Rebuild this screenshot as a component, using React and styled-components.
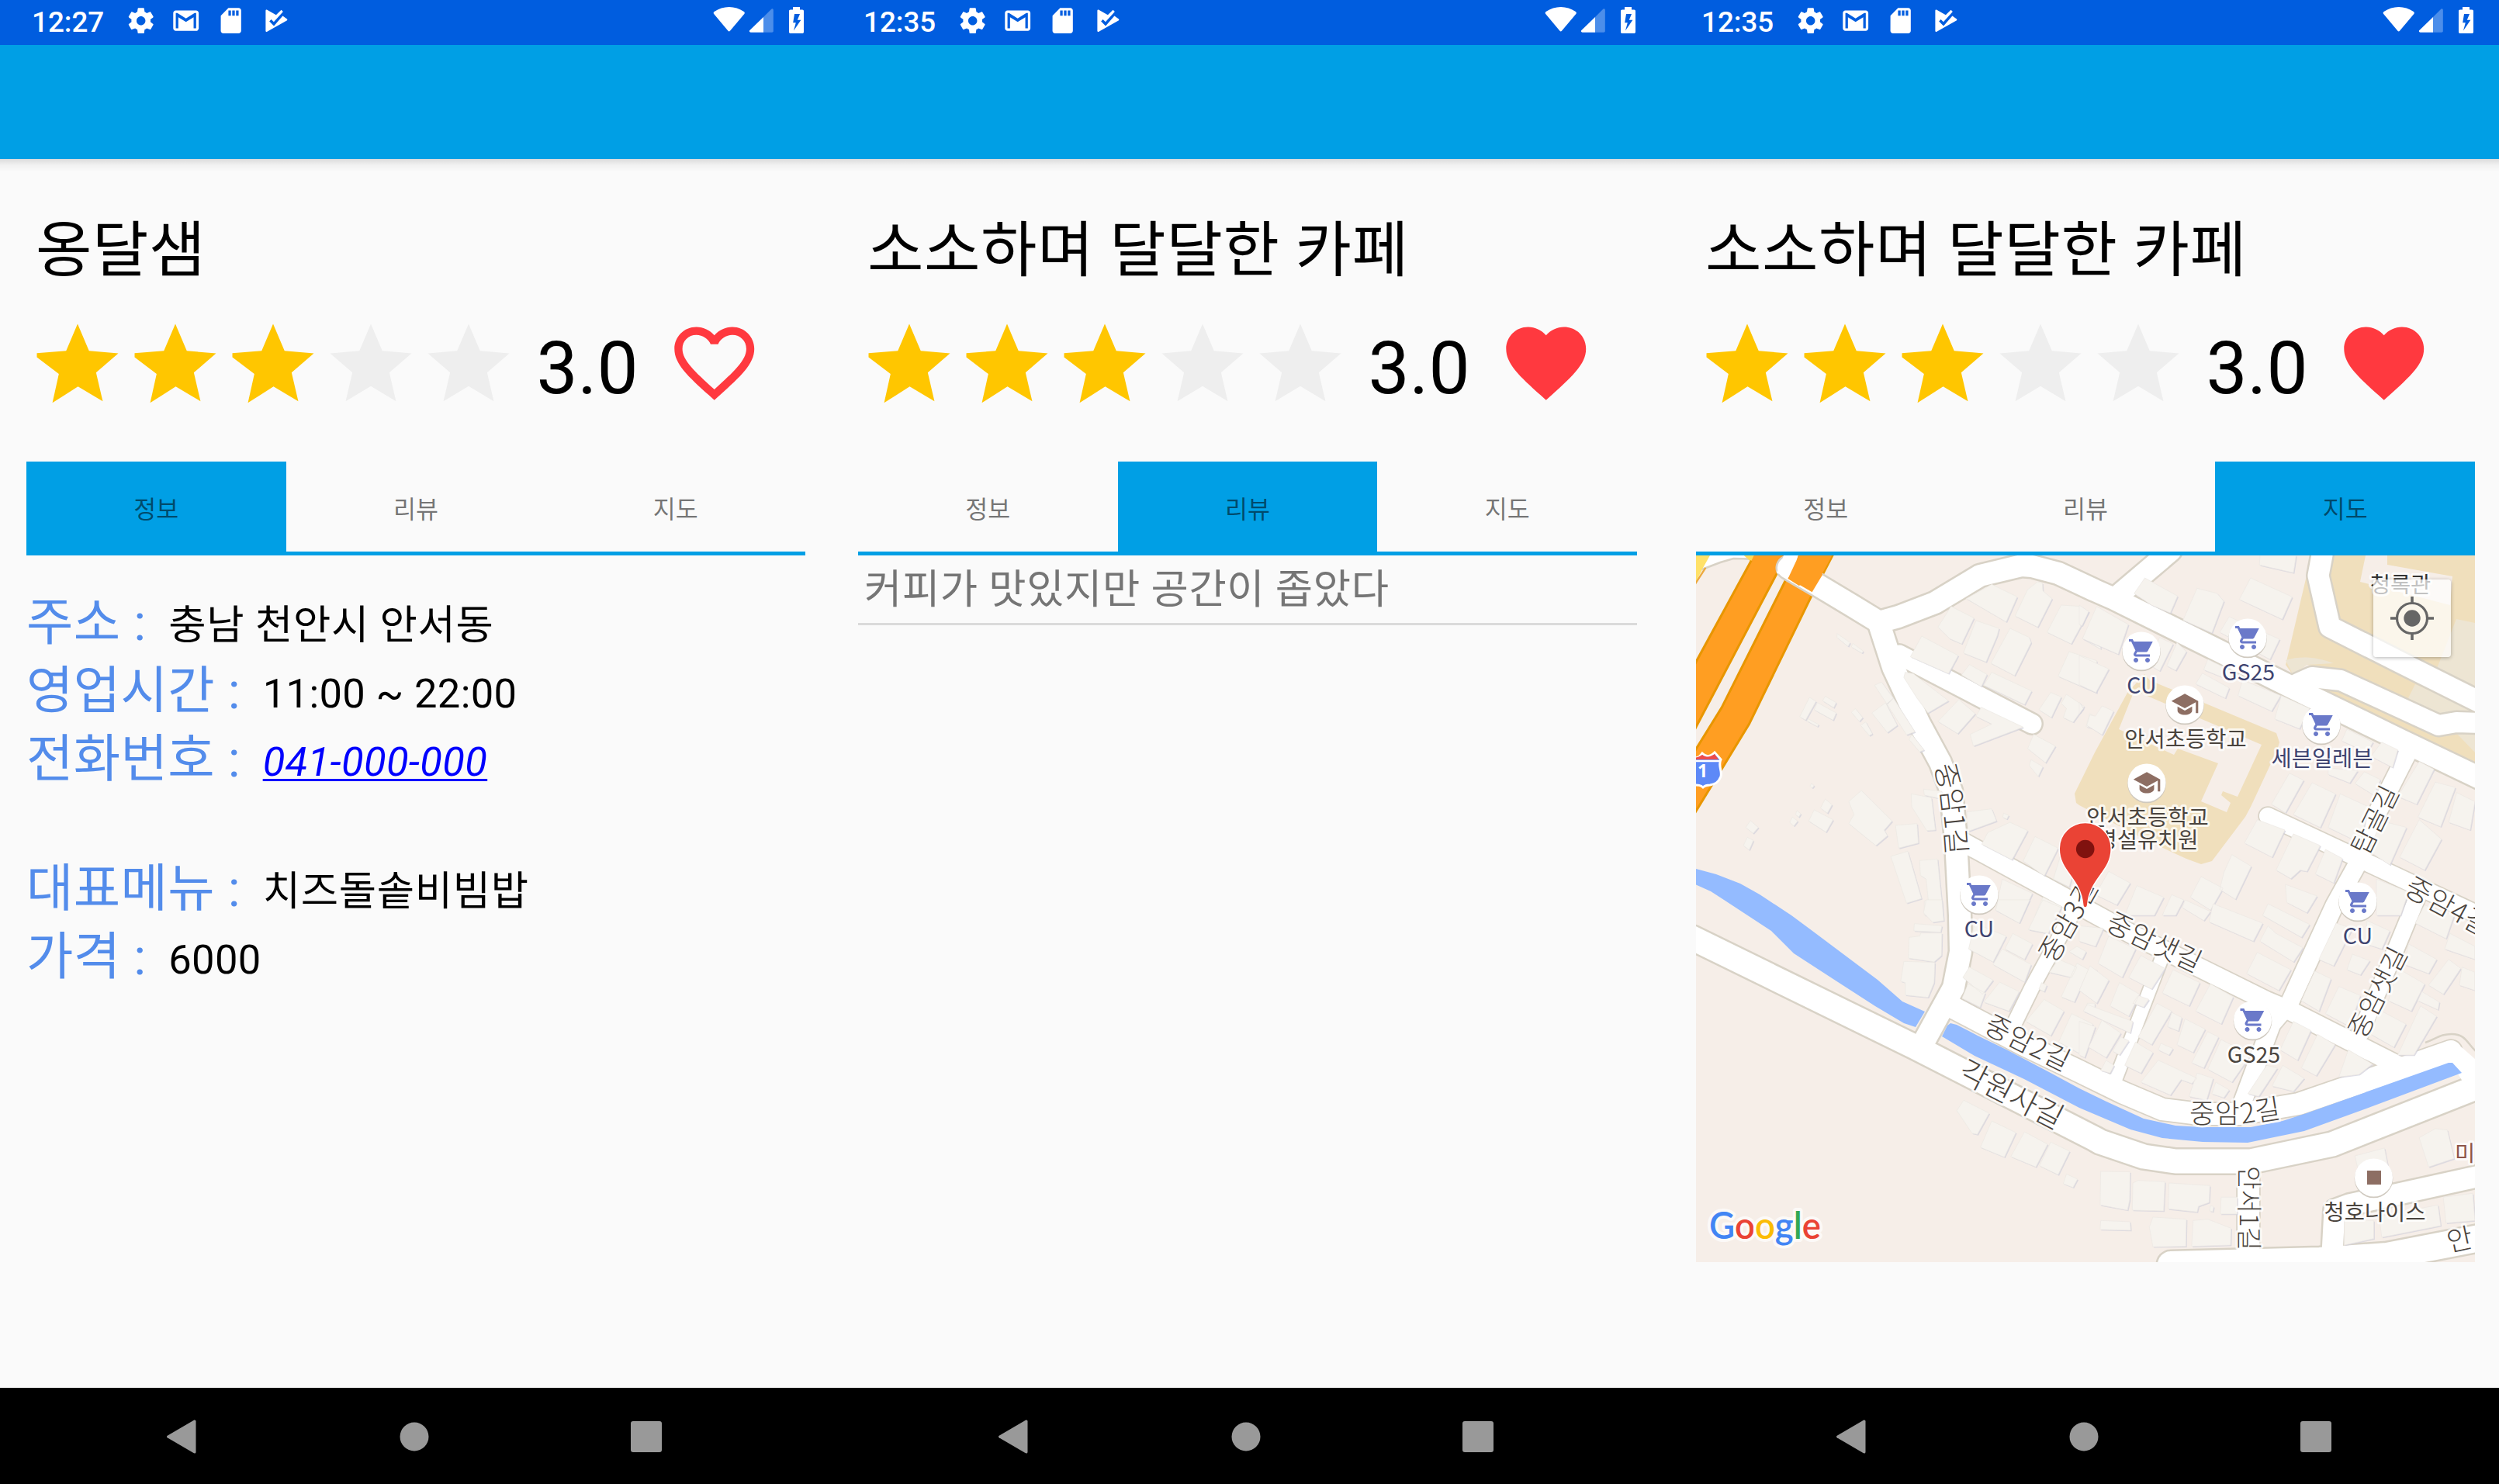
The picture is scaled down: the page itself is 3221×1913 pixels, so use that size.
import React from "react";
import styled, { createGlobalStyle } from "styled-components";

const GlobalStyle = createGlobalStyle`
  * { box-sizing: border-box; }
  body {
    margin: 0;
    background: #fafafa;
    font-family: Roboto, "Noto Sans CJK KR", sans-serif;
    -webkit-font-smoothing: antialiased;
  }
`;

const BLUE = "#009fe5";

/* ---------- layout ---------- */

const Board = styled.main`
  display: flex;
  width: 3221px;
  height: 1913px;
  overflow: hidden;
  background: #fafafa;
`;

const Phone = styled.section`
  display: flex;
  flex-direction: column;
  flex: none;
  width: ${(p) => p.$width}px;
  height: 1913px;
`;

const StatusBar = styled.header`
  display: flex;
  align-items: center;
  flex: none;
  height: 58px;
  padding: 0 0 5px 41px;
  background: #005ddf;
  color: #fff;
`;

const Clock = styled.span`
  width: 121px;
  font-size: 36.75px;
  font-weight: 500;
  line-height: 50px;
  padding-top: 4px;
  white-space: nowrap;
`;

const StatusIcons = styled.div`
  display: flex;
  gap: 18.4px;
  flex: 1;
`;

const StatusIcon = styled.svg`
  display: block;
  width: 39.4px;
  height: 39.4px;
  fill: #fff;
`;

const SystemIcons = styled.svg`
  display: block;
  flex: none;
  width: 130px;
  height: 53px;
  margin-right: ${(p) => p.$right}px;
`;

const AppBar = styled.div`
  flex: none;
  height: 147px;
  background: ${BLUE};
`;

const Content = styled.div`
  flex: 1;
  display: flex;
  flex-direction: column;
  padding-top: 67px;
  background: linear-gradient(rgba(0, 0, 0, 0.12), rgba(0, 0, 0, 0.035) 8px, rgba(0, 0, 0, 0) 17px) #fafafa;
`;

const Title = styled.h1`
  margin: 0 0 35px 46px;
  padding-top: 1px;
  height: 100px;
  font-size: 78.75px;
  font-weight: 400;
  line-height: 100px;
  letter-spacing: 0.6px;
  color: #000;
  white-space: nowrap;
`;

const RatingRow = styled.div`
  display: flex;
  align-items: center;
  height: 126px;
  margin: 0 0 62px 37px;
`;

const Star = styled.svg`
  display: block;
  width: 126px;
  height: 126px;
  fill: ${(p) => (p.$on ? "#ffc600" : "#eeeeee")};
`;

const Score = styled.span`
  width: 167.5px;
  margin-left: 24.5px;
  padding-top: 9px;
  font-size: 94.5px;
  line-height: 110px;
  color: #000;
`;

const Heart = styled.svg`
  display: block;
  width: 123.5px;
  height: 123.5px;
  margin-top: -4px;
  fill: #ff393f;
`;

const Sheet = styled.div`
  width: 1004px;
  margin-left: 34px;
`;

const Tabs = styled.nav`
  display: flex;
  height: 121px;
  border-bottom: 5px solid ${BLUE};
`;

const Tab = styled.div`
  flex: 1;
  padding-top: 39px;
  background: ${(p) => (p.$active ? BLUE : "transparent")};
  color: rgba(0, 0, 0, 0.54);
  font-size: 31.5px;
  line-height: 48px;
  text-align: center;
`;

const InfoList = styled.dl`
  display: flex;
  flex-direction: column;
  margin: 0;
  padding-top: 42px;
`;

const InfoRow = styled.div`
  display: flex;
  align-items: baseline;
  height: 88px;
  margin-top: ${(p) => (p.$gap ? 79 : 0)}px;
  line-height: 88px;
  white-space: pre;
`;

const Label = styled.dt`
  position: relative;
  top: 1px;
  font-size: 65.625px;
  letter-spacing: 0.4px;
  color: #538ceb;
`;

const Value = styled.dd`
  margin: 0 0 0 12px;
  font-size: 52.5px;
  letter-spacing: ${(p) => (p.$hangul ? 0.7 : 0.35)}px;
  color: #000;
`;

const PhoneLink = styled.a`
  color: #0000fe;
  font-style: italic;
  text-decoration: underline;
  text-decoration-thickness: 3px;
  text-underline-offset: 4px;
  text-decoration-skip-ink: none;
`;

const ReviewItem = styled.div`
  height: 90px;
  padding: 0 8px;
  border-bottom: 3px solid #dadada;
  color: #757575;
  font-size: 52.5px;
  line-height: 89px;
  letter-spacing: 0.6px;
  white-space: nowrap;
`;

const MapFrame = styled.div`
  position: relative;
  width: 1004px;
  height: 911px;
  overflow: hidden;
`;

const MapCanvas = styled.svg`
  display: block;
  width: 1004px;
  height: 911px;
`;

const LocateButton = styled.button`
  position: absolute;
  top: 31px;
  right: 31px;
  width: 100px;
  height: 100px;
  padding: 0;
  border: 0;
  border-radius: 4px;
  background: rgba(255, 255, 255, 0.7);
  box-shadow: 0 1px 5px rgba(0, 0, 0, 0.3);
`;

const NavBar = styled.footer`
  display: grid;
  grid-template-columns: repeat(3, 299.5px);
  place-items: center;
  flex: none;
  height: 124px;
  padding: 1px 0 0 85px;
  background: #000;
`;

const NavIcon = styled.svg`
  display: block;
  width: 44px;
  height: 44px;
  fill: #999;
`;

/* ---------- shared parts ---------- */

function Status({ time, right }) {
  return (
    <StatusBar>
      <Clock>{time}</Clock>
      <StatusIcons>
        <StatusIcon viewBox="0 0 24 24">
          <path d="M19.43 12.98c.04-.32.07-.64.07-.98s-.03-.66-.07-.98l2.11-1.65c.19-.15.24-.42.12-.64l-2-3.46c-.12-.22-.39-.3-.61-.22l-2.49 1c-.52-.4-1.08-.73-1.69-.98l-.38-2.65C14.46 2.18 14.25 2 14 2h-4c-.25 0-.46.18-.49.42l-.38 2.65c-.61.25-1.17.59-1.69.98l-2.49-1c-.23-.09-.49 0-.61.22l-2 3.46c-.13.22-.07.49.12.64l2.11 1.65c-.04.32-.07.65-.07.98s.03.66.07.98l-2.11 1.65c-.19.15-.24.42-.12.64l2 3.46c.12.22.39.3.61.22l2.49-1c.52.4 1.08.73 1.69.98l.38 2.65c.03.24.24.42.49.42h4c.25 0 .46-.18.49-.42l.38-2.65c.61-.25 1.17-.59 1.69-.98l2.49 1c.23.09.49 0 .61-.22l2-3.46c.12-.22.07-.49-.12-.64l-2.11-1.65zM12 15.5c-1.93 0-3.5-1.57-3.5-3.5s1.57-3.5 3.5-3.5 3.5 1.57 3.5 3.5-1.57 3.5-3.5 3.5z" />
        </StatusIcon>
        <StatusIcon viewBox="0 0 24 24">
          <path d="M20 4H4c-1.1 0-2 .9-2 2v12c0 1.1.9 2 2 2h16c1.1 0 2-.9 2-2V6c0-1.1-.9-2-2-2zm0 14h-2V9.25L12 13 6 9.25V18H4V6h1.2l6.8 4.25L18.8 6H20v12z" />
        </StatusIcon>
        <StatusIcon viewBox="0 0 24 24">
          <path d="M18 2h-8L4.02 8 4 20c0 1.1.9 2 2 2h12c1.1 0 2-.9 2-2V4c0-1.1-.9-2-2-2zm-6 6h-2V4h2v4zm3 0h-2V4h2v4zm3 0h-2V4h2v4z" />
        </StatusIcon>
        <StatusIcon viewBox="0 0 24 24">
          <path d="M4.5 4.2c0-.7.6-1 1.2-.7l7 3.9 4.1-3.9 1.4 1.3-7.3 8.2-2-2-1.5 1.5 3.6 3.7 6.9-7.9 3.2 2.2c.6.4.6 1 0 1.4L5.7 20.6c-.6.3-1.2 0-1.2-.7z" />
        </StatusIcon>
      </StatusIcons>
      <SystemIcons viewBox="910 0 130 53" $right={right}>
        <path
          d="M920.4 18.2c-1-1-1-2.300.2-3.200C932 7 947.500 7 958.900 15c1.200.9 1.200 2.200.2 3.200L941 39.800c-.8 1-1.800 1-2.600 0z"
          fill="#fff"
        />
        <path d="M996.800 13v27c0 1-.7 1.700-1.700 1.700H984V22l10-10c1.200-1.200 2.800-.6 2.800 1z" fill="#4c8eea" />
        <path d="M984 22v19.700h-16.500c-1.600 0-2.200-1.500-1.100-2.600z" fill="#fff" />
        <path
          d="M1022 9h9v3.600h3.200c1 0 1.800.8 1.800 1.800v26.800c0 1-.8 1.800-1.800 1.800h-15.400c-1 0-1.800-.8-1.800-1.800V14.400c0-1 .8-1.800 1.800-1.800h3.200zM1024 18l-1.800 11.300h3.600l-2.800 10.200 9.400-13.800h-4.600L1031 18z"
          fill="#fff"
          fillRule="evenodd"
        />
      </SystemIcons>
    </StatusBar>
  );
}

const STAR = "M12 17.27L18.18 21l-1.64-7.03L22 9.24l-7.19-.61L12 2 9.19 8.63 2 9.24l5.46 4.73L5.82 21z";
const STAR_ON =
  "M12.100 17.400L18.180 21l-1.640-7.030L22 9.240l-7.190-.610L12 2 9.190 8.630 2 9.200v1l5.400 4.100L5.820 21.400z";

function Rating({ liked }) {
  return (
    <RatingRow>
      {[1, 2, 3, 4, 5].map((n) => (
        <Star key={n} viewBox="0 0 24 24" $on={n <= 3}>
          <path d={n <= 3 ? STAR_ON : STAR} />
        </Star>
      ))}
      <Score>3.0</Score>
      <Heart viewBox="0 0 24 24">
        {liked ? (
          <path d="M12 21.35l-1.450-1.320C5.400 15.360 2 12.280 2 8.500 2 5.420 4.420 3 7.500 3c1.740 0 3.410.810 4.500 2.090C13.090 3.810 14.760 3 16.500 3 19.580 3 22 5.420 22 8.500c0 3.780-3.400 6.860-8.550 11.540L12 21.350z" />
        ) : (
          <path d="M16.5 3c-1.740 0-3.410.810-4.500 2.090C10.910 3.810 9.240 3 7.500 3 4.420 3 2 5.420 2 8.500c0 3.780 3.400 6.860 8.550 11.540L12 21.350l1.450-1.320C18.600 15.360 22 12.280 22 8.500 22 5.420 19.580 3 16.500 3zm-4.400 15.550l-.1.100-.1-.100C7.140 14.240 4 11.390 4 8.500 4 6.500 5.500 5 7.500 5c1.540 0 3.040.990 3.570 2.360h1.870C13.460 5.990 14.960 5 16.500 5c2 0 3.500 1.500 3.500 3.500 0 2.890-3.140 5.740-7.900 10.050z" />
        )}
      </Heart>
    </RatingRow>
  );
}

function Nav() {
  return (
    <NavBar>
      <NavIcon viewBox="0 0 44 44">
        <path d="M36.500 .9c1.700-.9 3 0 3 1.400v39.400c0 1.400-1.300 2.300-3 1.400L2.700 23.200c-1-.6-1-1.800 0-2.400z" />
      </NavIcon>
      <NavIcon viewBox="0 0 44 44">
        <circle cx="22" cy="22" r="18.5" />
      </NavIcon>
      <NavIcon viewBox="0 0 44 44">
        <rect x="1" y="2" width="40" height="40" rx="3" />
      </NavIcon>
    </NavBar>
  );
}

const TABS = ["정보", "리뷰", "지도"];

function Screen({ width, right, time, title, liked, active, children }) {
  return (
    <Phone $width={width}>
      <Status time={time} right={right} />
      <AppBar />
      <Content>
        <Title>{title}</Title>
        <Rating liked={liked} />
        <Sheet>
          <Tabs>
            {TABS.map((t, i) => (
              <Tab key={t} $active={i === active}>
                {t}
              </Tab>
            ))}
          </Tabs>
          {children}
        </Sheet>
      </Content>
      <Nav />
    </Phone>
  );
}

/* ---------- map ---------- */

const ROADS = [
  { w: 28, d: "M119 16 155 37 200 64 236 86 261 79 308 61 366 26 420 13 433 14 467 23 514 45 539 56 666 119 770 171 908 238 1010 287" },
  { w: 27, d: "M612-6 546 50" },
  { w: 27, d: "M808-6 802 26 817 92 908 138 1010 189" },
  { w: 26, d: "M776 165 794 157 831 161 957 219 980 215 1010 216" },
  { w: 28, d: "M236 88 254 144 288 217 315 267 329 304 335 367 340 464 341 511 332 557 292 630" },
  { w: 25, d: "M262 128 433 217" },
  { w: 24, minor: true, d: "M345 370 457 431 563 489 735 574 766 587 910 660" },
  { w: 23, minor: true, d: "M922 245 877 334 853 397 823 451 765 577 742 604 704 706" },
  { w: 22, minor: true, d: "M737 336 846 387 1010 464" },
  { w: 21, minor: true, d: "M930 440 894 527 856 617" },
  { w: 19, minor: true, d: "M497 440 433 557 408 608" },
  { w: 17, minor: true, d: "M600 520 539 680" },
  { w: 28, minor: true, d: "M326 580 423 631 494 665 549 692 601 714 649 720 701 720 777 707 873 674 973 639" },
  { w: 31, d: "M-5 493 281 633 514 752 521 756 577 775 618 781 715 781 820 759 1010 684" },
  { w: 34, d: "M612 914 804 909 891 903 1010 880" },
  { w: 27, d: "M820 900 823 844 842 837 1010 800" },
  { w: 28, minor: true, d: "M712 790 712 900" },
];

// Building footprints, one path for each quarter of the map.
const TILES = [
  {
    at: "translate(-16 -16) scale(.338 .3333)",
    d: "M1078 215 1175 160 1272 208 1230 305ZM1350 150 1368 155 1370 185 1405 215 1350 325 1264 282 1312 180ZM1440 240 1515 245 1545 265 1478 390 1386 345ZM1020 245 1107 290 1060 390 1015 370 970 325ZM1115 300 1203 330 1195 360 1153 460 1067 425ZM1245 330 1318 365 1325 385 1262 513 1172 465ZM908 360 1047 435 1010 505 865 440ZM1470 420 1575 455 1575 580 1428 515ZM1090 470 1157 508 1135 555 1060 510ZM1175 500 1327 572 1300 625 1145 550ZM1400 578 1440 595 1402 675 1355 645ZM1460 585 1528 632 1485 693 1448 675 1460 640 1440 620ZM585 350 635 385 627 400 585 365ZM645 388 685 418 680 426 640 402ZM480 597 505 612 465 685 443 672ZM540 593 582 617 572 637 530 610ZM510 617 582 657 570 685 498 645ZM475 680 515 702 510 710 470 688ZM655 640 683 675 670 690 640 655ZM695 692 720 738 708 745 675 705ZM755 538 800 600 775 622 728 550ZM770 618 815 705 777 733 718 657ZM800 600 882 730 850 742 777 625ZM870 740 917 800 900 808 860 760ZM845 500 875 505 1010 610 932 657 890 600 840 520ZM1050 605 1112 660 1045 737 970 690ZM1135 635 1295 712 1105 785 1093 740 1175 700 1115 670ZM1335 740 1418 785 1380 850 1312 795ZM1325 838 1370 865 1352 903 1318 860ZM678 957 795 1075 765 1110 777 1132 733 1170 630 1085 650 1050 630 1000ZM498 1032 570 1070 543 1118 477 1075ZM540 990 566 1012 548 1045 522 1025ZM255 1073 285 1100 265 1123 237 1100ZM243 1138 266 1150 250 1187 228 1170ZM432 1035 447 1047 439 1060 427 1050ZM415 1060 435 1075 420 1095 405 1080ZM488 930 498 938 490 948 482 940ZM868 970 945 985 960 1110 927 1112 870 1020ZM915 952 985 960 985 990 918 975ZM808 1092 890 1085 895 1160 820 1180ZM790 1212 855 1192 907 1375 850 1393ZM900 1228 968 1222 990 1440 918 1440 918 1385 933 1380 925 1300 903 1285ZM1080 1040 1175 1028 1193 1075 1085 1115ZM1220 1045 1240 1053 1232 1068 1217 1060ZM1160 1120 1245 1080 1312 1112 1252 1225 1137 1165ZM1340 1135 1428 1180 1375 1287 1295 1230ZM1440 1200 1500 1230 1470 1330 1410 1300ZM1215 1300 1330 1355 1290 1440 1190 1420ZM1370 1370 1440 1405 1420 1440 1340 1440ZM1560 300 1590 300 1590 410 1522 370ZM1548 660 1568 670 1568 720 1535 710Z",
  },
  {
    at: "translate(494 -16) scale(.345 .3333)",
    d: "M640 135 795 208 758 295 598 218ZM675 48 810 48 800 115 673 85ZM440 175 515 195 540 225 495 347 388 298ZM245 135 367 205 340 270 270 240 205 195ZM65 245 183 315 145 430 12 370ZM0 240 35 265 10 320 0 315ZM0 435 110 487 62 578 0 548ZM560 285 748 372 712 450 525 345ZM365 385 400 420 360 493 327 475ZM300 365 350 390 300 495 260 470ZM480 450 580 500 560 530 465 490ZM460 503 560 560 545 600 435 545ZM610 530 752 590 718 650 593 590ZM755 590 860 640 822 718 730 680ZM0 615 15 640 0 660ZM85 630 128 650 85 742 28 705 40 665 60 670ZM1000 720 1097 770 1075 810 980 765ZM1130 770 1190 800 1170 868 1090 825ZM930 870 1040 880 1010 928 930 895ZM785 890 838 917 770 1043 718 1010ZM870 927 957 970 900 1100 800 1050ZM1065 885 1125 915 1100 975 1030 930ZM975 970 1080 1020 1050 1160 930 1100ZM1270 845 1325 875 1260 1010 1190 980ZM1330 925 1405 945 1350 1097 1265 1060ZM1410 965 1478 1000 1460 1110 1380 1080ZM1270 1070 1353 1145 1290 1265 1197 1215ZM1130 1075 1222 1100 1160 1245 1080 1190ZM665 1070 768 1110 720 1215 617 1160ZM800 1125 900 1170 850 1270 825 1265 790 1298 735 1265ZM920 1185 983 1220 950 1315 882 1280ZM570 1205 642 1250 583 1378 525 1340 540 1275ZM455 1290 537 1335 490 1420 415 1370ZM110 1270 190 1315 140 1400 60 1360ZM215 1325 315 1370 280 1440 170 1440ZM345 1360 390 1380 360 1440 310 1440ZM770 1320 888 1365 850 1430 775 1390ZM1110 1300 1230 1350 1200 1440 1110 1440Z",
  },
  {
    at: "translate(-16 444) scale(.338 .3333)",
    d: "M925 0 985 0 992 80 950 87 915 50ZM880 92 985 100 980 125 878 120ZM860 145 900 140 905 128 985 128 983 215 955 240 857 225ZM840 238 958 242 955 320 932 377 845 368 845 320 828 315ZM1110 90 1230 140 1180 240 1087 190ZM1255 130 1330 170 1300 230 1225 190ZM1215 190 1325 250 1300 318 1180 250ZM1090 260 1180 310 1140 365 1065 300ZM1085 325 1150 360 1130 415 1062 380ZM1205 318 1280 355 1240 430 1145 395ZM1375 385 1450 430 1400 525 1305 470ZM1480 440 1560 480 1530 605 1430 550ZM1430 230 1500 260 1480 300 1395 280ZM1500 180 1535 200 1520 230 1470 200ZM1500 245 1545 270 1490 395 1440 375ZM1550 270 1575 270 1575 380 1510 350ZM1370 0 1440 30 1390 130 1315 115ZM1200 0 1320 0 1280 90 1190 40ZM1365 320 1385 330 1375 355 1355 345ZM1540 400 1568 400 1568 445 1525 430ZM1068 775 1165 825 1120 907 1100 903 1042 815ZM1175 855 1267 900 1223 995 1132 957ZM1300 897 1388 945 1343 1033 1248 993ZM1400 937 1472 972 1428 1063 1357 1028ZM1460 1060 1502 1080 1485 1112 1448 1098Z",
  },
  {
    at: "translate(494 444) scale(.345 .3333)",
    d: "M0 100 90 110 60 180 0 160ZM500 15 685 90 650 160 485 85ZM705 15 860 95 830 145 685 60ZM395 0 490 45 465 80 385 30ZM705 100 735 130 835 185 800 240 675 160ZM665 203 790 270 745 350 625 285ZM110 140 210 190 160 300 70 245ZM230 215 320 265 270 345 185 300ZM40 255 110 310 65 400 0 350ZM350 270 450 320 410 410 310 360ZM490 325 575 375 530 480 435 430ZM150 320 225 365 185 450 115 410ZM220 370 260 385 240 415 200 400ZM30 405 200 470 190 515 15 430ZM85 465 155 515 100 610 35 570ZM0 470 60 490 20 610 0 600ZM155 530 185 545 150 600 125 585ZM290 400 345 430 270 560 220 530ZM345 435 383 455 370 507 330 490ZM395 460 470 500 425 590 365 560ZM480 510 520 530 465 650 420 630ZM530 540 640 600 570 705 480 655ZM210 550 275 590 230 670 170 640ZM305 555 350 575 335 600 295 580ZM295 620 440 690 420 710 380 695 340 755 230 705ZM440 670 500 690 475 775 410 760ZM510 705 560 735 540 765 495 750ZM100 620 130 640 115 670 80 660ZM800 470 865 505 815 620 750 580ZM890 520 955 560 885 680 830 650ZM1005 580 1095 635 1045 675 970 685ZM760 640 840 690 800 740 720 720ZM700 640 740 650 670 760 630 750ZM960 90 1020 110 950 255 895 230ZM1020 210 1085 235 1050 290 1000 270ZM880 275 940 305 895 430 830 390ZM970 335 1050 370 1010 490 920 440ZM1230 170 1335 230 1305 285 1215 250ZM1190 265 1290 325 1240 430 1155 390ZM1380 230 1425 265 1360 365 1305 330ZM1430 260 1478 280 1478 350 1420 330ZM1120 425 1220 480 1175 570 1090 520ZM1275 410 1335 450 1250 600 1190 600ZM1280 355 1345 395 1340 425 1265 390ZM1290 20 1400 60 1370 150 1255 90ZM1385 130 1478 180 1478 230 1365 190ZM1075 80 1160 120 1130 190 1070 170ZM80 1050 190 1052 188 1160 180 1200 78 1180ZM220 1085 320 1090 315 1203 198 1200 200 1095ZM335 1095 488 1105 485 1170 445 1185 440 1207 332 1195ZM490 1183 502 1186 499 1206 487 1203ZM530 1150 590 1150 590 1215 527 1215ZM80 1240 190 1245 192 1278 78 1275ZM275 1227 400 1235 398 1340 275 1342 262 1265ZM425 1240 480 1235 567 1270 565 1335 420 1340ZM1030 990 1140 960 1155 1040 1045 1060ZM1270 920 1330 885 1375 890 1400 1000 1305 1033ZM990 1235 1100 1240 1100 1310 990 1335ZM1120 1225 1290 1190 1340 1180 1350 1260 1130 1305ZM1360 1150 1470 1135 1478 1240 1370 1250Z",
  },
];

const STREETS = [
  { id: "s1", text: "중암1길", size: 36, d: "M320 268 329 302 334 347 338 402" },
  { id: "s2", text: "중암3길", size: 35, d: "M451 521 521 397" },
  { id: "s3", text: "중암샛길", size: 35.5, d: "M532 470 656 529" },
  { id: "s4", text: "중암2길", size: 35.5, d: "M375 602 489 658" },
  { id: "s5", text: "각원사길", size: 39.5, d: "M342 661 482 733" },
  { id: "s6", text: "중암2길", size: 35.5, d: "M636 719 706 719 763 710" },
  { id: "s7", text: "안서1길", size: 33, d: "M713 787 713 900" },
  { id: "s8", text: "탑골길", size: 34, d: "M854 383 903 284" },
  { id: "s9", text: "중암4길", size: 36, d: "M917 424 1040 490" },
  { id: "s10", text: "중암샛길", size: 34, d: "M850 619 914 492" },
  { id: "s11", text: "안", size: 36, d: "M968 885 1010 876" },
];

const CART =
  "M7 18c-1.100 0-1.990.900-1.990 2S5.900 22 7 22s2-.900 2-2-.900-2-2-2zM1 2v2h2l3.600 7.590-1.350 2.450c-.160.280-.250.610-.250.960 0 1.100.900 2 2 2h12v-2H7.420c-.140 0-.250-.110-.250-.250l.030-.120.900-1.630h7.450c.750 0 1.410-.410 1.750-1.030L21.500 4H5.210l-.940-2H1zm16 16c-1.100 0-1.990.900-1.990 2s.890 2 1.990 2 2-.900 2-2-.900-2-2-2z";
const CAP = "M12 3L1 9l11 6 9-4.900V19h2V9zM6 13.600v3.200C6 19 9 20.400 12 20.400s6-1.400 6-3.600v-3.200l-6 3.300z";

const SHOP = "#3f4470";
const INK = "#4a443e";

const PLACES = [
  { x: 574, y: 123, icon: "cart", ink: SHOP, lines: ["CU"], tx: 574.5, ty: 178 },
  { x: 711, y: 106, icon: "cart", ink: SHOP, lines: ["GS25"], tx: 712, ty: 161 },
  { x: 630, y: 192, icon: "cap", ink: INK, lines: ["안서초등학교"], tx: 631, ty: 247 },
  { x: 581, y: 293, icon: "cap", ink: INK, lines: ["안서초등학교", "병설유치원"], tx: 582, ty: 347.5 },
  { x: 806, y: 218, icon: "cart", ink: SHOP, lines: ["세븐일레븐"], tx: 807, ty: 271.5 },
  { x: 365, y: 437, icon: "cart", ink: SHOP, lines: ["CU"], tx: 365, ty: 491.5 },
  { x: 853, y: 446, icon: "cart", ink: SHOP, lines: ["CU"], tx: 853, ty: 500.5 },
  { x: 717.5, y: 599, icon: "cart", ink: INK, lines: ["GS25"], tx: 719, ty: 653.5 },
  { x: 873.5, y: 802, icon: "square", ink: INK, lines: ["청호나이스"], tx: 875, ty: 856.5 },
];

const MapText = styled.text`
  font-family: "Noto Sans CJK KR", sans-serif;
  font-size: ${(p) => p.$size || 28.5}px;
  font-weight: ${(p) => (p.$light ? 300 : 400)};
  fill: ${(p) => p.$ink || INK};
  stroke: rgba(255, 255, 255, 0.75);
  stroke-width: 6px;
  stroke-linejoin: round;
  paint-order: stroke;
`;

const LogoText = styled.text`
  font-family: Lato, sans-serif;
  font-size: 48px;
  font-weight: 600;
  stroke: rgba(255, 255, 255, 0.7);
  stroke-width: 8px;
  stroke-linejoin: round;
  paint-order: stroke;
`;

function Place({ x, y, icon, ink, lines, tx, ty }) {
  return (
    <g>
      <circle cx={x} cy={y + 1.5} r="24.800" fill="#cfc9bf" />
      <circle cx={x} cy={y} r="24.500" fill="#fff" />
      {icon === "cart" && <path d={CART} fill="#6a79c9" transform={`translate(${x - 17.5} ${y - 18}) scale(1.500)`} />}
      {icon === "cap" && <path d={CAP} fill="#8d6e63" transform={`translate(${x - 18.8} ${y - 18.5}) scale(1.570)`} />}
      {icon === "square" && <rect x={x - 8.5} y={y - 9} width="18" height="18" fill="#8d6e63" />}
      {lines.map((l, i) => (
        <MapText key={l} x={tx} y={ty + i * 29} textAnchor="middle" $ink={ink}>
          {l}
        </MapText>
      ))}
    </g>
  );
}

function CityMap() {
  return (
    <MapFrame>
      <MapCanvas viewBox="0 0 1004 911">
        <rect width="1004" height="911" fill="#f6eee8" />

        {/* campus grounds */}
        <path d="M787 26 760 141 770 155 787 141 834 148 958 205 1004 202V0H821Z" fill="#f0dfbc" />
        <path d="M863 0h28v12l84 15-3 37-116-30Z" fill="#f6eee8" />
        <path d="M980 82l24 5v84l-50-23ZM927 166l77 34-46 5-40-21ZM760 135c20-6 40-4 62 4l-35 2-17 14Z" fill="#ede5d3" />
        <path d="M804 172l27 3 126 58 24-4 23 1v38Z" fill="#f0dfbc" />
        <path d="M980 229h24v25Z" fill="#ede5d3" />
        <path d="M585 161l163 68 4 12-3 10-34 73-7 13-43 57-14 4-19-7-52-24-86-45-4-3-2-12 26-53 42-77 22-24Z" fill="#f0dfbc" />
        <path d="M565 174l164 70-31 67-19-7-2 5 12 10-5 12-33-14 22-49-52-19-5 8-71-33Z" fill="#f6eee8" />

        {/* motorway */}
        <g transform="translate(-16 -16) scale(.338 .3333)">
          <path d="M95 40H250L230 65 190 60 140 75 70 100Z" fill="#fff" />
          <path d="M260 62 190 60 140 75 70 102" fill="none" stroke="#d8d2c6" strokeWidth="8" />
          <path d="M40 40H105L72 100 40 165Z" fill="#ffe168" />
          <path d="M84 96 40 165" stroke="#eca93f" strokeWidth="7" />
          <path d="M230 48H275L260 75Z" fill="#ffd95a" />
          <path d="M30 490 258 70 272 40H392L355 115 30 745Z" fill="#ff9e22" />
          <path d="M258 68 30 492M357 115 30 745" fill="none" stroke="#e89600" strokeWidth="9" />
          <path d="M440 40H572L490 200 250 700 30 1066V825L145 635 392 140Z" fill="#ff9e22" />
          <path d="M572 40 490 200 250 700 30 1066M392 138 145 637 30 825M442 40 430 66" fill="none" stroke="#e89600" strokeWidth="9" />
        </g>

        <g fill="none" stroke="#d8d2c6" strokeLinecap="round" strokeLinejoin="round">
          {ROADS.map((r) => (
            <path key={r.d} d={r.d} strokeWidth={r.w + (r.minor ? 3.5 : 5)} />
          ))}
        </g>
        <g fill="none" stroke="#fff" strokeLinecap="round" strokeLinejoin="round">
          {ROADS.map((r) => (
            <path key={r.d} d={r.d} strokeWidth={r.w} />
          ))}
        </g>
        <path d="M958 635c8-6 24-6 30 0l16 14v40h-12l-2-8-14-22-20-4Z" fill="#fff" />
        <path d="M940 628c16-6 20-11 34-11 18 0 20 12 31 22v-3" fill="none" stroke="#d8d2c6" strokeWidth="2.500" />

        {/* the slip road passes under the two carriageways */}
        <g transform="translate(-16 -16) scale(.338 .3333)">
          <path d="M385 40H440L430 70 398 138 355 115Z" fill="#fff" />
          <path d="M430 68 398 138 440 165 525 125 560 60 568 40H442Z" fill="#ff9e22" />
          <path d="M398 136 490 190 530 122 470 60Z" fill="#ff9e22" />
        </g>

        {TILES.map((t) => (
          <g key={t.at} transform={t.at}>
            <path d={t.d} fill="#d3d2dc" opacity=".75" transform="translate(4 4)" />
            <path d={t.d} fill="#f6f3ee" stroke="#ece8e3" strokeWidth="2" />
          </g>
        ))}

        {/* stream */}
        <path
          d="M0 404l26 7 31 12 25 14 41 27 27 20 44 33 40 30 32 28 29 13-12 20-15-5-37-22-48-31-57-37-29-29-61-40-17-11-20-9Z"
          fill="#94bbff"
        />
        <path
          d="M328 603l8 2 27 14 37 18 57 30 37 20 35 17 48 22 41 9 35 2h62l41-8 31-10 183-65h5l12 13-134 50-69 25-73 15-58-1-52-5-41-11-66-28-71-37-64-30-42-25 7-14Z"
          fill="#94bbff"
        />

        {/* route shield */}
        <g>
          <path d="M-10 258h4c5 5 10 3 14-3 5 5 10 5 16-1l8 9c-4 8 2 14 0 22-3 8-8 10-14 11-5 0-7 1-9 3-3-3-6-3-12-3h-8Z" fill="#5d89f7" stroke="#fff" strokeWidth="3" />
          <path d="M-10 259c8 3 12 2 18-2 6 4 10 3 16-1l5 7H-10Z" fill="#ee4b4b" />
          <path d="M-10 265h41" stroke="#fff" strokeWidth="2.500" />
          <text x="2" y="286" fontFamily="Noto Sans, sans-serif" fontWeight="700" fontSize="23" fill="#fff">
            1
          </text>
        </g>

        {STREETS.map((s) => (
          <g key={s.id}>
            <path id={s.id} d={s.d} fill="none" />
            <MapText $light $size={s.size} dy={s.size * 0.37}>
              <textPath href={`#${s.id}`}>{s.text}</textPath>
            </MapText>
          </g>
        ))}

        <MapText x="908" y="48" textAnchor="middle" $ink="#333">
          청록관
        </MapText>
        <MapText x="978" y="781" $ink="#8d5548">
          미
        </MapText>

        {PLACES.map((p) => (
          <Place key={`${p.x}-${p.y}`} {...p} />
        ))}

        {/* selected place */}
        <path
          d="M501.700 454c-2 0-2.700-1-3-4-3-34-30.500-42-30.500-72a33.500 33.500 0 0 1 67 0c0 30-27.500 38-30.500 72-.3 3-1 4-3 4Z"
          fill="#ea4335"
          stroke="#fff"
          strokeWidth="1.500"
        />
        <circle cx="501.700" cy="378.500" r="11.800" fill="#80120f" />

        <LogoText x="17" y="881" textLength="144" lengthAdjust="spacingAndGlyphs">
          <tspan fill="#4285f4">G</tspan>
          <tspan fill="#ea4335">o</tspan>
          <tspan fill="#fbbc05">o</tspan>
          <tspan fill="#4285f4">g</tspan>
          <tspan fill="#34a853">l</tspan>
          <tspan fill="#ea4335">e</tspan>
        </LogoText>
      </MapCanvas>
      <LocateButton aria-label="내 위치">
        <svg width="100" height="100" viewBox="0 0 100 100">
          <circle cx="50" cy="50" r="19.500" fill="none" stroke="#666" strokeWidth="3.200" />
          <circle cx="50" cy="50" r="10.700" fill="#666" />
          <path d="M50 22v8M50 70v8M22 50h8M70 50h8" stroke="#666" strokeWidth="3.600" />
        </svg>
      </LocateButton>
    </MapFrame>
  );
}

/* ---------- app ---------- */

const INFO = [
  { label: "주소 : ", value: "충남 천안시 안서동", hangul: true },
  { label: "영업시간 : ", value: "11:00 ~ 22:00" },
  { label: "전화번호 : ", value: "041-000-000", link: true },
  { label: "대표메뉴 : ", value: "치즈돌솥비빔밥", hangul: true, gap: true },
  { label: "가격 : ", value: "6000" },
];

export default function App() {
  return (
    <>
      <GlobalStyle />
      <Board>
        <Screen width={1072} right={32} time="12:27" title="옹달샘" active={0}>
          <InfoList>
            {INFO.map((r) => (
              <InfoRow key={r.label} $gap={r.gap}>
                <Label>{r.label}</Label>
                <Value $hangul={r.hangul}>{r.link ? <PhoneLink>{r.value}</PhoneLink> : r.value}</Value>
              </InfoRow>
            ))}
          </InfoList>
        </Screen>
        <Screen width={1080} right={40} time="12:35" title="소소하며 달달한 카페" liked active={1}>
          <ReviewItem>커피가 맛있지만 공간이 좁았다</ReviewItem>
        </Screen>
        <Screen width={1069} right={29} time="12:35" title="소소하며 달달한 카페" liked active={2}>
          <CityMap />
        </Screen>
      </Board>
    </>
  );
}
